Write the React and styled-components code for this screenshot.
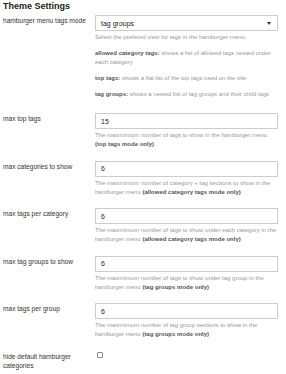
import React from 'react'
import styled, { createGlobalStyle } from 'styled-components'

const Global = createGlobalStyle`
  body {
    margin: 0;
    background: #fff;
    font-family: "Liberation Sans", Arial, sans-serif;
    color: #222;
  }
`

const Page = styled.div`
  padding: 1px 8px 0 3px;
`

const Title = styled.h3`
  margin: 0 0 3px;
  font-size: 9px;
  font-weight: bold;
  color: #222;
  line-height: 11px;
`

const Row = styled.div`
  display: grid;
  grid-template-columns: 92px 1fr;
  margin-bottom: ${p => p.$gap || 11.5}px;
`

const Label = styled.div`
  font-size: 6.6px;
  line-height: 9.5px;
  padding-top: 1px;
  padding-right: 2px;
  color: #333;
`

const Value = styled.div`
  display: flex;
  flex-direction: column;
`

const Box = styled.div`
  height: 16px;
  box-sizing: border-box;
  border: 1px solid #ccc;
  display: flex;
  align-items: center;
  justify-content: space-between;
  padding: 0 6px 0 5px;
  font-size: 7px;
  color: #222;
`

const Caret = styled.span`
  width: 0;
  height: 0;
  border-left: 2.5px solid transparent;
  border-right: 2.5px solid transparent;
  border-top: 3px solid #333;
`

const Desc = styled.p`
  margin: ${p => p.$top || 2}px 0 0;
  font-size: 6px;
  line-height: 9px;
  color: #999;
  b {
    color: #555;
    font-weight: bold;
  }
`

const Check = styled.span`
  margin: 1px 0 0 2px;
  width: 4px;
  height: 4px;
  border: 1px solid #888;
  border-radius: 1px;
`

const numbers = [
  ['max top tags', '15', 'The maximimum number of tags to show in the hamburger menu', 'top tags mode only'],
  ['max categories to show', '6', 'The maximimum number of category + tag sections to show in the hamburger menu', 'allowed category tags mode only'],
  ['max tags per category', '6', 'The maximimum number of tags to show under each category in the hamburger menu', 'allowed category tags mode only'],
  ['max tag groups to show', '6', 'The maximimum number of tags to show under tag group in the hamburger menu', 'tag groups mode only'],
  ['max tags per group', '6', 'The maximimum number of tag group sections to show in the hamburger menu', 'tag groups mode only'],
]

const App = () => {
  return (
    <Page>
      <Global />
      <Title>Theme Settings</Title>
      <Row $gap={14}>
        <Label>hamburger menu tags mode</Label>
        <Value>
          <Box>
            <span>tag groups</span>
            <Caret />
          </Box>
          <Desc>Select the prefered view for tags in the hamburger menu.</Desc>
          <Desc $top={7}><b>allowed category tags:</b> shows a list of allowed tags nested under each category</Desc>
          <Desc $top={7}><b>top tags:</b> shows a flat list of the top tags used on the site</Desc>
          <Desc $top={7}><b>tag groups:</b> shows a nested list of tag groups and their child tags</Desc>
        </Value>
      </Row>
      {numbers.map(([label, val, text, mode]) => (
        <Row key={label}>
          <Label>{label}</Label>
          <Value>
            <Box>{val}</Box>
            <Desc>{text} <b>({mode})</b></Desc>
          </Value>
        </Row>
      ))}
      <Row>
        <Label>hide default hamburger categories</Label>
        <Value>
          <Check />
        </Value>
      </Row>
    </Page>
  )
}

export default App
